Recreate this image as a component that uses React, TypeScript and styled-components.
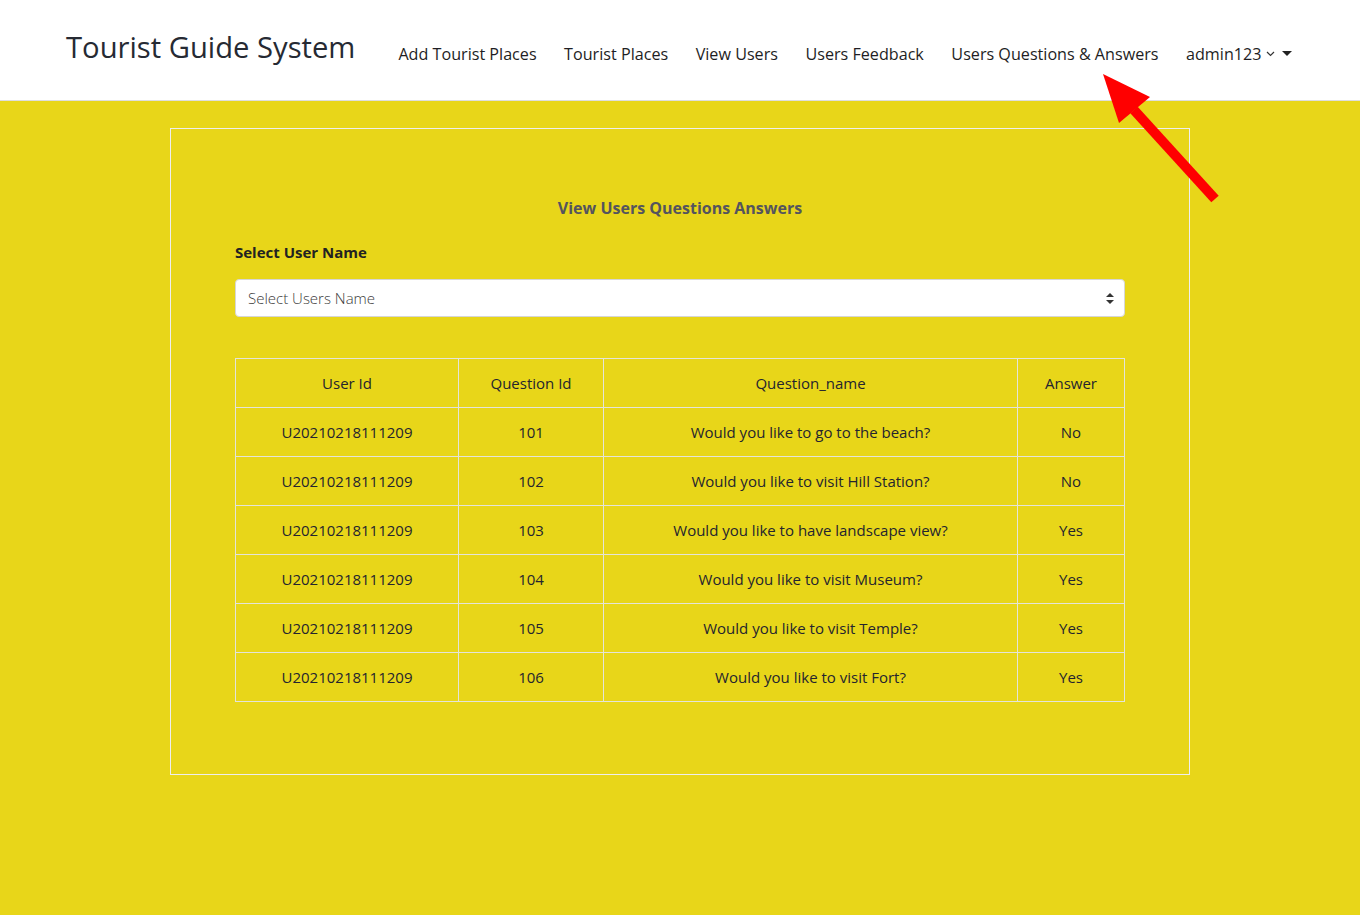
import React from 'react';
import styled, { createGlobalStyle } from 'styled-components';

const GlobalStyle = createGlobalStyle`
  html, body {
    margin: 0;
    padding: 0;
    background: #e8d619;
    font-family: "Open Sans", "Noto Sans", sans-serif;
    color: #212529;
  }
  * { box-sizing: border-box; }
`;

const Page = styled.div`
  position: relative;
  min-height: 915px;
  background: #e8d619;
`;

const NavBar = styled.nav`
  height: 101px;
  background: #fff;
  border-bottom: 1px solid #dedede;
  display: flex;
  align-items: center;
  padding: 0 0 0 66px;
`;

const Brand = styled.a`
  flex-shrink: 0;
  white-space: nowrap;
  font-size: 29.2px;
  font-weight: 500;
  color: #262a33;
  margin-right: 43px;
  margin-top: -6px;
`;

const NavList = styled.ul`
  display: flex;
  align-items: center;
  flex-shrink: 0;
  list-style: none;
  margin: 7px 0 0;
  padding: 0;
  gap: 27.5px;
`;

const NavItem = styled.li`
  font-size: 16.15px;
  font-weight: 400;
  color: #1e1e24;
  display: flex;
  align-items: center;
  gap: 5px;
  white-space: nowrap;
`;

const Caret = styled.span`
  width: 0;
  height: 0;
  border-left: 5px solid transparent;
  border-right: 5px solid transparent;
  border-top: 5px solid #222;
  margin-left: 2px;
`;

const Card = styled.section`
  width: 1020px;
  margin: 27px auto 0;
  border: 1px solid #eeeeee;
  padding: 68px 64px 72px;
`;

const Title = styled.h2`
  margin: 0 0 23px;
  text-align: center;
  font-size: 16px;
  font-weight: 700;
  color: #54545e;
`;

const Label = styled.label`
  display: block;
  font-size: 15px;
  font-weight: 700;
  color: #222;
  margin-bottom: 17px;
`;

const SelectBox = styled.div`
  height: 38px;
  background: #fff;
  border: 1px solid #d6d6d6;
  border-radius: 4px;
  display: flex;
  align-items: center;
  justify-content: space-between;
  padding: 0 10px 0 12px;
  font-size: 15px;
  font-weight: 300;
  color: #3a3a3a;
  margin-bottom: 41px;
`;

const Table = styled.table`
  width: 100%;
  border-collapse: collapse;
  font-size: 15px;
  font-weight: 400;
  color: #24242f;
`;

const Cell = styled.td<{ $w?: number }>`
  border: 1px solid #e4e4da;
  height: 49px;
  text-align: center;
  vertical-align: middle;
  padding: 0 8px;
  width: ${p => (p.$w ? `${p.$w}px` : 'auto')};
`;

const HeadCell = styled(Cell).attrs({ as: 'th' })`
  font-weight: 400;
`;

const Arrow = styled.svg`
  position: absolute;
  left: 0;
  top: 0;
  pointer-events: none;
`;

const rows = [
  { q: 101, name: 'Would you like to go to the beach?', a: 'No' },
  { q: 102, name: 'Would you like to visit Hill Station?', a: 'No' },
  { q: 103, name: 'Would you like to have landscape view?', a: 'Yes' },
  { q: 104, name: 'Would you like to visit Museum?', a: 'Yes' },
  { q: 105, name: 'Would you like to visit Temple?', a: 'Yes' },
  { q: 106, name: 'Would you like to visit Fort?', a: 'Yes' },
];

const App: React.FC = () => {
  return (
    <Page>
      <GlobalStyle />
      <NavBar>
        <Brand>Tourist Guide System</Brand>
        <NavList>
          <NavItem>Add Tourist Places</NavItem>
          <NavItem>Tourist Places</NavItem>
          <NavItem>View Users</NavItem>
          <NavItem>Users Feedback</NavItem>
          <NavItem>Users Questions &amp; Answers</NavItem>
          <NavItem>
            admin123
            <svg width="9" height="6" viewBox="0 0 9 6">
              <path d="M1 1 L4.5 4.5 L8 1" fill="none" stroke="#333" strokeWidth="1.2" />
            </svg>
            <Caret />
          </NavItem>
        </NavList>
      </NavBar>

      <Card>
        <Title>View Users Questions Answers</Title>
        <Label>Select User Name</Label>
        <SelectBox>
          <span>Select Users Name</span>
          <svg width="8" height="11" viewBox="0 0 8 11">
            <path d="M4 0 L8 4 L0 4 Z M0 7 L8 7 L4 11 Z" fill="#333" />
          </svg>
        </SelectBox>
        <Table>
          <thead>
            <tr>
              <HeadCell $w={223}>User Id</HeadCell>
              <HeadCell $w={145}>Question Id</HeadCell>
              <HeadCell>Question_name</HeadCell>
              <HeadCell $w={107}>Answer</HeadCell>
            </tr>
          </thead>
          <tbody>
            {rows.map(r => (
              <tr key={r.q}>
                <Cell>U20210218111209</Cell>
                <Cell>{r.q}</Cell>
                <Cell>{r.name}</Cell>
                <Cell>{r.a}</Cell>
              </tr>
            ))}
          </tbody>
        </Table>
      </Card>

      <Arrow width="1360" height="915" viewBox="0 0 1360 915">
        <line x1="1134" y1="110" x2="1215" y2="199" stroke="#ff0000" strokeWidth="10" />
        <polygon points="1103,74 1150,97 1119,123" fill="#ff0000" />
      </Arrow>
    </Page>
  );
};

export default App;
